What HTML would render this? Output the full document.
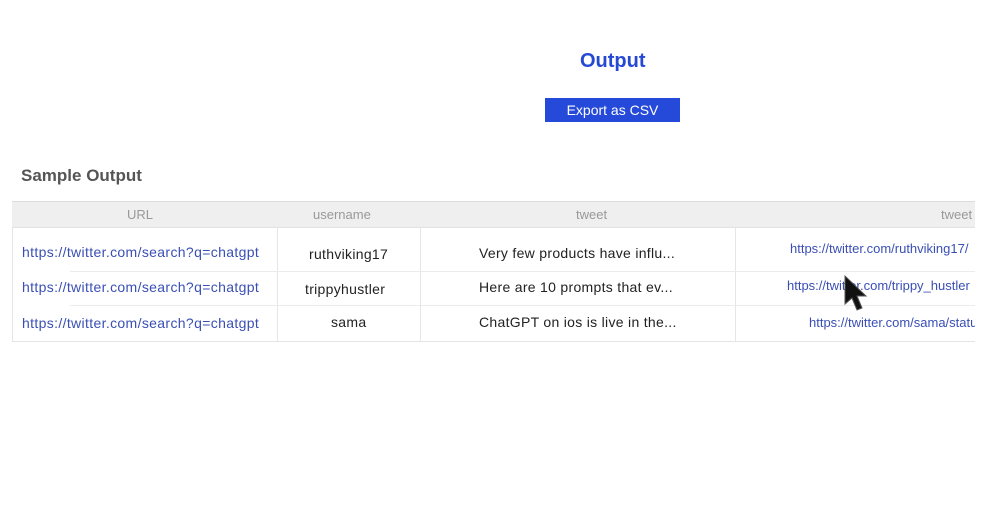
<!DOCTYPE html>
<html><head><style>
body{margin:0;width:1000px;height:515px;background:#fff;font-family:"Liberation Sans",sans-serif;position:relative;overflow:hidden}
.a{position:absolute;white-space:nowrap}
.h{color:#999;font-size:13px;top:207px}
.l{color:#3a4fb5;font-size:14px;letter-spacing:0.35px}
.t{color:#222;font-size:14px;letter-spacing:0.3px}
.v{position:absolute;width:1px;background:#e6e6e6;top:228px;height:114px}
.hr{position:absolute;height:1px;background:#ececec}
</style></head><body>
<div class="a" style="left:580px;top:50px;color:#2649d4;font-weight:bold;font-size:20px">Output</div>
<div class="a" style="left:545px;top:98px;width:135px;height:24px;background:#2549d9;color:#fff;font-size:14px;text-align:center;line-height:24px">Export as CSV</div>
<div class="a" style="left:21px;top:166px;color:#555;font-weight:bold;font-size:17px">Sample Output</div>
<div class="a" style="left:12px;top:201px;width:963px;height:141px;border:1px solid #e4e4e4;border-right:none;box-sizing:border-box"></div>
<div class="a" style="left:12px;top:201px;width:963px;height:27px;background:#efefef;border-top:1px solid #ddd;border-bottom:1px solid #e2e2e2;box-sizing:border-box"></div>
<div class="a h" style="left:127px">URL</div>
<div class="a h" style="left:313px">username</div>
<div class="a h" style="left:576px">tweet</div>
<div class="a h" style="left:941px">tweet</div>
<div class="v" style="left:277px"></div><div class="v" style="left:420px"></div><div class="v" style="left:735px"></div>
<div class="hr" style="left:70px;width:905px;top:271px"></div>
<div class="hr" style="left:70px;width:905px;top:305px"></div>
<div class="a l" style="left:22px;top:244px">https://twitter.com/search?q=chatgpt</div>
<div class="a l" style="left:22px;top:279px">https://twitter.com/search?q=chatgpt</div>
<div class="a l" style="left:22px;top:315px">https://twitter.com/search?q=chatgpt</div>
<div class="a t" style="left:309px;top:246px">ruthviking17</div>
<div class="a t" style="left:305px;top:281px">trippyhustler</div>
<div class="a t" style="left:331px;top:314px">sama</div>
<div class="a t" style="left:479px;top:245px">Very few products have influ...</div>
<div class="a t" style="left:479px;top:279px">Here are 10 prompts that ev...</div>
<div class="a t" style="left:479px;top:314px">ChatGPT on ios is live in the...</div>
<div style="position:absolute;left:736px;top:228px;width:239px;height:114px;overflow:hidden">
<div class="a l" style="left:54px;top:13px;font-size:13px;letter-spacing:0">https://twitter.com/ruthviking17/</div>
<div class="a l" style="left:51px;top:50px;font-size:13px;letter-spacing:0">https://twitter.com/trippy_hustler</div>
<div class="a l" style="left:73px;top:87px;font-size:13px;letter-spacing:0">https://twitter.com/sama/status</div>
</div>
<svg class="a" style="left:842px;top:274px" width="30" height="40" viewBox="0 0 30 40"><path d="M3 2 L3 30 L10 24 L15 36 L20 34 L15 22 L24 22 Z" fill="#111" stroke="#555" stroke-width="1"/></svg>
</body></html>
